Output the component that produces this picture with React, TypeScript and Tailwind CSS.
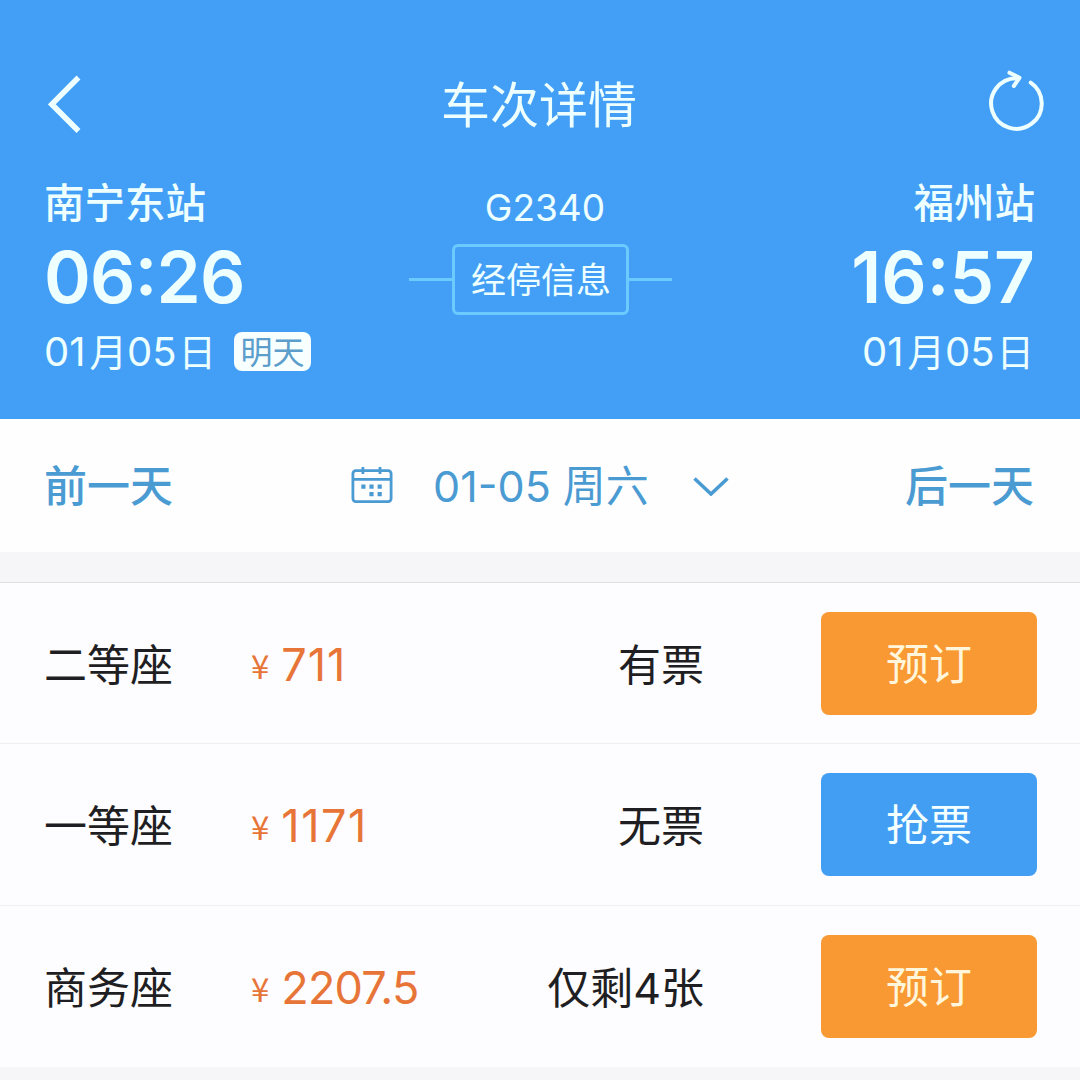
import clsx from 'clsx';

interface Seat {
  name: string;
  price: string;
  priceClass: string;
  stock: string;
  available: boolean;
}

const seats: Seat[] = [
  { name: '二等座', price: '711', priceClass: 'tracking-[1px]', stock: '有票', available: true },
  { name: '一等座', price: '1171', priceClass: 'tracking-[1.5px]', stock: '无票', available: false },
  { name: '商务座', price: '2207.5', priceClass: 'tracking-[-0.8px]', stock: '仅剩4张', available: true },
];

function BackIcon() {
  return (
    <svg width="34" height="58" viewBox="0 0 34 58" fill="none" stroke="currentColor" strokeWidth="5.5">
      <path d="M30.500 2.500 3.800 29.300l26.700 26.700" />
    </svg>
  );
}

function RefreshIcon() {
  return (
    <svg
      className="overflow-visible"
      width="56"
      height="64"
      viewBox="0 0 56 64"
      fill="none"
      stroke="currentColor"
      strokeWidth="4"
      strokeLinecap="round"
    >
      <path d="M42.700 10.600a25.300 25.300 0 1 1-14-4.400" />
      <path d="M21.500 0.700 31.500 5.800 25.800 14" strokeLinejoin="round" />
    </svg>
  );
}

function CalendarIcon() {
  return (
    <svg width="42" height="38" viewBox="0 0 42 38" fill="none" stroke="currentColor" strokeWidth="2.8">
      <rect x="1.9" y="3.6" width="38.2" height="31" rx="3" />
      <path d="M2 12.400h38M11.900 0v7M29 0v7" />
      <path
        d="M10.300 17.600h4.200v4.200h-4.200zM18.400 17.600h4.200v4.200h-4.200zM26.600 17.600h4.200v4.200h-4.200zM18.400 25h4.200v4.200h-4.200zM26.600 25h4.200v4.200h-4.200z"
        fill="currentColor"
        stroke="none"
      />
    </svg>
  );
}

function ChevronIcon() {
  return (
    <svg width="36" height="20" viewBox="0 0 36 20" fill="none" stroke="currentColor" strokeWidth="3.6">
      <path d="M1.500 2.500 18 18 34.500 2.500" />
    </svg>
  );
}

function TravelDate({ month, day }: { month: string; day: string }) {
  return (
    <span className="flex h-10 items-baseline text-[40px] leading-10">
      {month}
      <span className="ml-1 text-[37.500px]">月</span>
      {day}
      <span className="ml-0.5 text-[37.500px]">日</span>
    </span>
  );
}

function SeatRow({ name, price, priceClass, stock, available }: Seat) {
  return (
    <div className="flex h-[161.400px] items-center border-b border-[#efeff2] pl-11 pr-[43px] text-[43px] text-[#1f1f23] last:border-b-0">
      <span className="w-[207px] pt-1">{name}</span>
      <span className="flex items-baseline gap-3 pt-0.5 text-[#e87538]">
        <span className="relative -top-0.5 font-['Noto_Sans_CJK_SC',sans-serif] text-[33px] leading-none">¥</span>
        <span className={clsx('text-[45px]', priceClass)}>{price}</span>
      </span>
      <span className="ml-auto mr-[117px] pt-1">{stock}</span>
      <button
        className={clsx(
          'h-[103px] w-[216px] rounded-lg pt-0.5',
          available ? 'bg-[#f99933] text-[#fff6dc]' : 'bg-[#429ef3] text-[#f4ffff]'
        )}
      >
        {available ? '预订' : '抢票'}
      </button>
    </div>
  );
}

export default function App() {
  return (
    <div className="h-[1080px] w-[1080px] overflow-hidden bg-[#f6f5f8] font-[Inter,'Noto_Sans_CJK_SC',sans-serif] leading-none">
      {/* Header */}
      <header className="h-[419px] bg-[#439ff6] pt-[72px] text-[#eeffff]">
        <div className="flex h-16 items-center justify-between pl-12 pr-9">
          <BackIcon />
          <h1 className="pl-2 pt-0.5 text-[49px]">车次详情</h1>
          <RefreshIcon />
        </div>

        <div className="grid grid-cols-3 px-11 pt-12">
          <div>
            <div className="text-[40.500px] font-medium">南宁东站</div>
            <div className="mt-[17px] text-[71px] font-semibold tracking-[-0.8px] [font-feature-settings:'case']">06:26</div>
            <div className="mt-[19px] flex items-center gap-[18px]">
              <TravelDate month="01" day="05" />
              <span className="flex h-[39px] w-[77px] items-center justify-center rounded-lg bg-[#f7ffff] pt-0.5 text-[32px] text-[#5b9dcb]">明天</span>
            </div>
          </div>

          <div className="flex flex-col items-center pl-0.5 pt-[5px]">
            <div className="pl-2 text-[37px]">G2340</div>
            <div className="mt-[18px] flex items-center">
              <div className="h-[3px] w-[43px] bg-[#6bcbff]" />
              <button className="h-[71px] w-[177px] rounded-md border-3 border-[#6bcbff] pt-0.5 text-[35px]">经停信息</button>
              <div className="h-[3px] w-[43px] bg-[#6bcbff]" />
            </div>
          </div>

          <div className="flex flex-col items-end pr-px">
            <div className="text-[40.500px] font-medium">福州站</div>
            <div className="mt-[17px] text-[71px] font-semibold">16:57</div>
            <div className="mt-[19px] pr-px">
              <TravelDate month="01" day="05" />
            </div>
          </div>
        </div>
      </header>

      {/* Date switcher */}
      <nav className="flex h-[133px] items-center justify-between bg-[#fefefe] pl-11 pr-[46px] text-[43px] text-[#4b9bd3]">
        <button className="pt-0.5 font-medium">前一天</button>
        <div className="flex items-center pl-0.5">
          <CalendarIcon />
          <span className="ml-10 pt-0.5">01-05 周六</span>
          <span className="ml-11">
            <ChevronIcon />
          </span>
        </div>
        <button className="pt-0.5 font-medium">后一天</button>
      </nav>

      {/* Seat list */}
      <main className="mt-[30px] border-t border-[#dfdfe3] bg-[#fdfcfe]">
        {seats.map((seat) => (
          <SeatRow key={seat.name} {...seat} />
        ))}
      </main>
    </div>
  );
}
